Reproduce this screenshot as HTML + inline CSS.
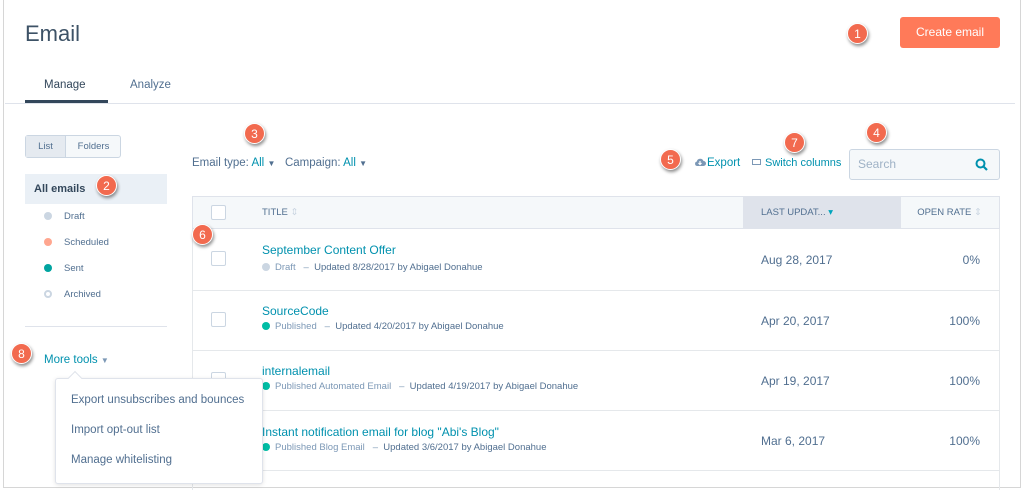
<!DOCTYPE html>
<html><head><meta charset="utf-8"><style>
*{box-sizing:border-box;margin:0;padding:0}
body{width:1024px;height:490px;background:#fff;font-family:"Liberation Sans",sans-serif;color:#33475b;position:relative;overflow:hidden}
.frame{position:absolute;left:3px;top:-2px;width:1018px;height:490px;border:1px solid #d6d6d6;border-top:none}
.a{position:absolute;white-space:nowrap}
.badge{position:absolute;width:21px;height:21px;border-radius:50%;background:#f26a4f;color:#fff;font-size:12px;text-align:center;line-height:21px;box-shadow:1px 2px 3px rgba(0,0,0,.45);border:1px solid #fff}
.link{color:#0091ae}
.cb{position:absolute;width:15px;height:15px;border:1px solid #cbd6e2;border-radius:2px;background:#fff}
.row{position:absolute;left:192px;width:808px;border-top:1px solid #e5e8eb}
.t{font-size:12px;color:#0091ae}
.s{font-size:9.5px;color:#7c98b6}
.dot{display:inline-block;width:8px;height:8px;border-radius:50%;margin-right:5px;vertical-align:-1px}
.d{font-size:12px;color:#516f90}
</style></head><body>
<div class="frame"></div>
<div class="a" style="left:25px;top:21px;font-size:22px;color:#3d5266">Email</div>
<div class="a" style="left:900px;top:17px;width:100px;height:31px;background:#ff7a59;border-radius:3px;color:#fff;font-size:12px;text-align:center;line-height:31px">Create email</div>
<div class="a" style="left:44px;top:79px;font-size:11.5px">Manage</div>
<div class="a" style="left:130px;top:79px;font-size:11.5px;color:#516f90">Analyze</div>
<div class="a" style="left:25px;top:100px;width:83px;height:3px;background:#33475b"></div>
<div class="a" style="left:5px;top:103px;width:1010px;height:1px;background:#dfe3eb"></div>

<div class="a" style="left:25px;top:135px;width:96px;height:23px;border:1px solid #cbd6e2;border-radius:3px;background:#f5f8fa;font-size:9.5px;color:#516f90">
<div style="position:absolute;left:0;top:0;width:40px;height:21px;background:#e5eaf0;border-right:1px solid #cbd6e2;text-align:center;line-height:21px">List</div>
<div style="position:absolute;left:40px;top:0;width:55px;height:21px;text-align:center;line-height:21px">Folders</div></div>
<div class="a" style="left:25px;top:174px;width:142px;height:30px;background:#eaf0f6;font-size:11px;font-weight:bold;line-height:30px;padding-left:9px">All emails</div>
<div class="a" style="left:44px;top:211px;font-size:9.5px;color:#516f90"><span class="dot" style="background:#cbd6e2;margin-right:12px"></span>Draft</div>
<div class="a" style="left:44px;top:237px;font-size:9.5px;color:#516f90"><span class="dot" style="background:#ffa68f;margin-right:12px"></span>Scheduled</div>
<div class="a" style="left:44px;top:263px;font-size:9.5px;color:#516f90"><span class="dot" style="background:#00a4a0;margin-right:12px"></span>Sent</div>
<div class="a" style="left:44px;top:289px;font-size:9.5px;color:#516f90"><span class="dot" style="border:2px solid #cbd6e2;margin-right:12px"></span>Archived</div>
<div class="a" style="left:25px;top:326px;width:142px;height:1px;background:#dfe3eb"></div>
<div class="a link" style="left:44px;top:354px;font-size:11.5px">More tools <span style="font-size:8px;color:#7c98b6">▼</span></div>

<div class="a" style="left:192px;top:157px;font-size:11.5px;color:#516f90">Email type: <span class="link">All</span> <span style="font-size:8px">▼</span>&nbsp;&nbsp; Campaign: <span class="link">All</span> <span style="font-size:8px">▼</span></div>
<div class="a link" style="left:694px;top:157px;font-size:11.5px"><svg width="12" height="9" viewBox="0 0 12 9" style="margin-right:1px"><path d="M3 9h6.5a2.5 2.5 0 0 0 0-5A3.5 3.5 0 0 0 2.8 4.5 2.3 2.3 0 0 0 3 9z" fill="#7c98b6"/><path d="M6 4v3.5M4.5 6l1.5 1.5L7.5 6" stroke="#fff" stroke-width="1.2" fill="none"/></svg>Export</div>
<div class="a link" style="left:752px;top:157px;font-size:11px"><span style="display:inline-block;width:9px;height:6px;border:1.5px solid #7c98b6;margin-right:4px;vertical-align:1px"></span>Switch columns</div>
<div class="a" style="left:849px;top:149px;width:151px;height:31px;border:1px solid #cbd6e2;border-radius:3px;background:#f5f8fa;font-size:12px;color:#9fb2c6;line-height:29px;padding-left:8px">Search
<svg style="position:absolute;right:11px;top:8px" width="13" height="13" viewBox="0 0 13 13"><circle cx="5.5" cy="5.5" r="4" fill="none" stroke="#0091ae" stroke-width="2"/><path d="M8.5 8.5L12 12" stroke="#0091ae" stroke-width="2.2"/></svg></div>

<div class="a" style="left:192px;top:196px;width:808px;height:33px;background:#f5f8fa;border:1px solid #dfe3eb"></div>
<div class="a" style="left:743px;top:197px;width:158px;height:32px;background:#dfe3eb"></div>
<div class="cb" style="left:211px;top:205px"></div>
<div class="a" style="left:262px;top:207px;font-size:9.5px;color:#516f90">TITLE <span style="color:#cbd6e2">⇕</span></div>
<div class="a" style="left:761px;top:207px;font-size:9.5px;color:#516f90">LAST UPDAT... <span style="color:#00a4bd">▾</span></div>
<div class="a" style="right:42px;top:207px;font-size:9.5px;color:#516f90">OPEN RATE <span style="color:#cbd6e2">⇕</span></div>
<div class="a" style="left:192px;top:229px;width:1px;height:261px;background:#e5e8eb"></div>
<div class="a" style="left:999px;top:229px;width:1px;height:261px;background:#e5e8eb"></div>

<div class="row" style="top:290px"></div><div class="row" style="top:350px"></div><div class="row" style="top:410px"></div><div class="row" style="top:470px"></div>

<div class="cb" style="left:211px;top:251px"></div>
<div class="a t" style="left:262px;top:243px">September Content Offer</div>
<div class="a s" style="left:262px;top:262px"><span class="dot" style="background:#cbd6e2"></span>Draft &nbsp; – &nbsp;<span style="color:#516f90">Updated 8/28/2017 by Abigael Donahue</span></div>
<div class="a d" style="left:761px;top:253px">Aug 28, 2017</div><div class="a d" style="right:44px;top:253px">0%</div>

<div class="cb" style="left:211px;top:312px"></div>
<div class="a t" style="left:262px;top:304px">SourceCode</div>
<div class="a s" style="left:262px;top:321px"><span class="dot" style="background:#00bda5"></span>Published &nbsp; – &nbsp;<span style="color:#516f90">Updated 4/20/2017 by Abigael Donahue</span></div>
<div class="a d" style="left:761px;top:314px">Apr 20, 2017</div><div class="a d" style="right:44px;top:314px">100%</div>

<div class="cb" style="left:211px;top:372px"></div>
<div class="a t" style="left:262px;top:364px">internalemail</div>
<div class="a s" style="left:262px;top:381px"><span class="dot" style="background:#00bda5"></span>Published Automated Email &nbsp; – &nbsp;<span style="color:#516f90">Updated 4/19/2017 by Abigael Donahue</span></div>
<div class="a d" style="left:761px;top:374px">Apr 19, 2017</div><div class="a d" style="right:44px;top:374px">100%</div>

<div class="a t" style="left:262px;top:425px">Instant notification email for blog "Abi's Blog"</div>
<div class="a s" style="left:262px;top:442px"><span class="dot" style="background:#00bda5"></span>Published Blog Email &nbsp; – &nbsp;<span style="color:#516f90">Updated 3/6/2017 by Abigael Donahue</span></div>
<div class="a d" style="left:761px;top:434px">Mar 6, 2017</div><div class="a d" style="right:44px;top:434px">100%</div>

<div class="a" style="left:55px;top:378px;width:208px;height:106px;background:#fff;border:1px solid #dfe3eb;border-radius:3px;box-shadow:0 1px 4px rgba(0,0,0,.12);font-size:11.5px;color:#516f90">
<div style="position:absolute;left:15px;top:15px">Export unsubscribes and bounces</div>
<div style="position:absolute;left:15px;top:45px">Import opt-out list</div>
<div style="position:absolute;left:15px;top:75px">Manage whitelisting</div></div>
<div class="a" style="left:70px;top:373px;width:10px;height:10px;background:#fff;border-left:1px solid #dfe3eb;border-top:1px solid #dfe3eb;transform:rotate(45deg)"></div>

<div class="badge" style="left:847px;top:23px">1</div>
<div class="badge" style="left:96px;top:175px">2</div>
<div class="badge" style="left:244px;top:123px">3</div>
<div class="badge" style="left:866px;top:122px">4</div>
<div class="badge" style="left:660px;top:149px">5</div>
<div class="badge" style="left:192px;top:224px">6</div>
<div class="badge" style="left:784px;top:132px">7</div>
<div class="badge" style="left:11px;top:343px">8</div>
</body></html>
